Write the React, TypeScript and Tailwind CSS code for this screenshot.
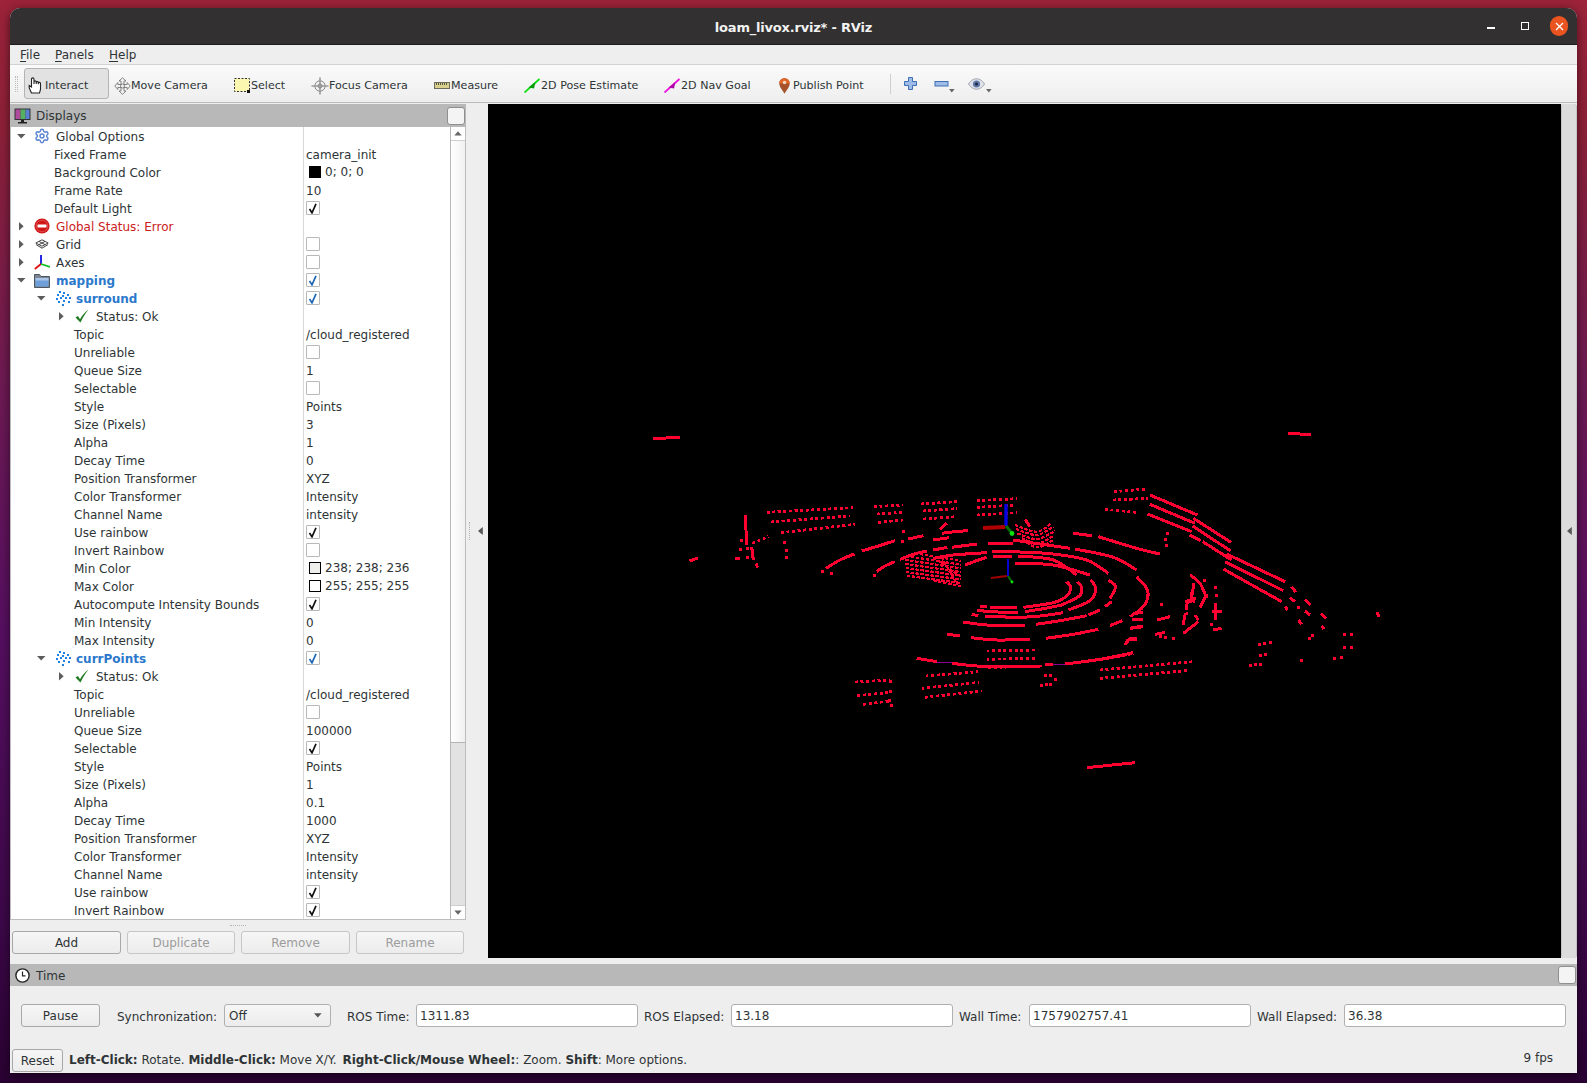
import type { ReactNode } from "react";
import { Settings } from "lucide-react";

type RowKind = "text" | "check" | "uncheck" | "color" | "none";

type Row = {
  label: string;
  level: number;
  arrow?: "down" | "right";
  icon?: "gear" | "error" | "grid" | "axes" | "folder" | "cloud" | "ok";
  tone?: "blue" | "red";
  value?: string;
  kind?: RowKind;
  swatch?: string;
};

const rows: Row[] = [
  { label: "Global Options", level: 0, arrow: "down", icon: "gear" },
  { label: "Fixed Frame", level: 1, value: "camera_init" },
  { label: "Background Color", level: 1, kind: "color", value: "0; 0; 0", swatch: "bg-black" },
  { label: "Frame Rate", level: 1, value: "10" },
  { label: "Default Light", level: 1, kind: "check" },
  { label: "Global Status: Error", level: 0, arrow: "right", icon: "error", tone: "red" },
  { label: "Grid", level: 0, arrow: "right", icon: "grid", kind: "uncheck" },
  { label: "Axes", level: 0, arrow: "right", icon: "axes", kind: "uncheck" },
  { label: "mapping", level: 0, arrow: "down", icon: "folder", tone: "blue", kind: "check" },
  { label: "surround", level: 1, arrow: "down", icon: "cloud", tone: "blue", kind: "check" },
  { label: "Status: Ok", level: 2, arrow: "right", icon: "ok" },
  { label: "Topic", level: 2, value: "/cloud_registered" },
  { label: "Unreliable", level: 2, kind: "uncheck" },
  { label: "Queue Size", level: 2, value: "1" },
  { label: "Selectable", level: 2, kind: "uncheck" },
  { label: "Style", level: 2, value: "Points" },
  { label: "Size (Pixels)", level: 2, value: "3" },
  { label: "Alpha", level: 2, value: "1" },
  { label: "Decay Time", level: 2, value: "0" },
  { label: "Position Transformer", level: 2, value: "XYZ" },
  { label: "Color Transformer", level: 2, value: "Intensity" },
  { label: "Channel Name", level: 2, value: "intensity" },
  { label: "Use rainbow", level: 2, kind: "check" },
  { label: "Invert Rainbow", level: 2, kind: "uncheck" },
  { label: "Min Color", level: 2, kind: "color", value: "238; 238; 236", swatch: "bg-[#eeeeec]" },
  { label: "Max Color", level: 2, kind: "color", value: "255; 255; 255", swatch: "bg-white" },
  { label: "Autocompute Intensity Bounds", level: 2, kind: "check" },
  { label: "Min Intensity", level: 2, value: "0" },
  { label: "Max Intensity", level: 2, value: "0" },
  { label: "currPoints", level: 1, arrow: "down", icon: "cloud", tone: "blue", kind: "check" },
  { label: "Status: Ok", level: 2, arrow: "right", icon: "ok" },
  { label: "Topic", level: 2, value: "/cloud_registered" },
  { label: "Unreliable", level: 2, kind: "uncheck" },
  { label: "Queue Size", level: 2, value: "100000" },
  { label: "Selectable", level: 2, kind: "check" },
  { label: "Style", level: 2, value: "Points" },
  { label: "Size (Pixels)", level: 2, value: "1" },
  { label: "Alpha", level: 2, value: "0.1" },
  { label: "Decay Time", level: 2, value: "1000" },
  { label: "Position Transformer", level: 2, value: "XYZ" },
  { label: "Color Transformer", level: 2, value: "Intensity" },
  { label: "Channel Name", level: 2, value: "intensity" },
  { label: "Use rainbow", level: 2, kind: "check" },
  { label: "Invert Rainbow", level: 2, kind: "check" },
];

// point cloud pieces, measured in 3x crops of the view: [originX, originY, lines]
// d = dotted rows, s = solid runs, b = dense rows, p = single points
type Piece = [number, number, { d?: number[][]; s?: number[][]; b?: number[][]; p?: number[][] }];

const cloud: Piece[] = [
  [
    720,
    470,
    {
      d: [
        [140, 127, 400, 113],
        [152, 156, 390, 138],
        [183, 188, 405, 163],
        [462, 110, 550, 105],
        [470, 132, 548, 127],
        [475, 157, 550, 150],
        [602, 102, 712, 95],
        [608, 123, 710, 116],
        [610, 147, 710, 140],
        [770, 92, 890, 86],
        [770, 112, 888, 105],
        [770, 135, 892, 128],
        [97, 220, 145, 200],
        [800, 543, 945, 540],
        [800, 568, 945, 565],
        [805, 593, 965, 588],
        [617, 618, 775, 605],
        [605, 655, 778, 637],
        [615, 682, 785, 663],
        [405, 636, 510, 630],
        [412, 677, 510, 667],
        [430, 703, 510, 693],
      ],
      b: [
        [585, 250, 722, 272],
        [558, 258, 722, 284],
        [556, 270, 722, 295],
        [556, 282, 722, 306],
        [557, 294, 722, 317],
        [557, 306, 722, 328],
        [560, 317, 722, 339],
        [640, 331, 722, 349],
        [640, 262, 722, 320],
        [665, 262, 712, 345],
        [885, 165, 950, 185, 995, 160],
        [888, 177, 950, 195, 1000, 170],
        [892, 190, 950, 207, 1005, 183],
        [905, 205, 955, 220, 1003, 196],
        [920, 218, 955, 232, 1000, 210],
      ],
      s: [
        [77, 135, 79, 225],
        [95, 230, 100, 270],
        [45, 267, 60, 265],
        [108, 280, 113, 293],
        [318, 295, 360, 270, 403, 252],
        [425, 243, 475, 228, 525, 212],
        [470, 305, 495, 288, 525, 275],
        [540, 268, 580, 253, 620, 243],
        [640, 240, 682, 232],
        [565, 207, 610, 197],
        [640, 210, 688, 203],
        [665, 190, 705, 185, 745, 182],
        [660, 178, 680, 160],
        [695, 232, 770, 222],
        [805, 220, 880, 220],
        [815, 244, 900, 246, 1000, 252, 1100, 270, 1165, 310],
        [880, 210, 960, 222, 1050, 235],
        [1060, 190, 1115, 197],
        [1135, 200, 1250, 235, 1320, 252],
        [1065, 237, 1180, 262, 1250, 300],
        [1250, 320, 1280, 355, 1283, 385, 1265, 415, 1230, 440],
        [640, 265, 700, 255, 800, 248],
        [820, 260, 875, 260],
        [895, 258, 1000, 270, 1070, 315],
        [735, 285, 770, 272, 800, 262],
        [885, 280, 1000, 285, 1110, 315],
        [1072, 335, 1085, 352, 1078, 378, 1025, 405],
        [1112, 330, 1127, 355, 1110, 392, 1045, 420],
        [1165, 330, 1187, 350, 1170, 385],
        [1040, 335, 1052, 352, 1040, 378, 1000, 398, 910, 412],
        [810, 412, 890, 414],
        [780, 408, 800, 408],
        [770, 420, 810, 425, 895, 428],
        [915, 425, 970, 416, 1025, 405],
        [755, 433, 775, 437],
        [795, 438, 890, 442, 960, 438, 1030, 428],
        [1105, 435, 1140, 420],
        [730, 456, 800, 465, 915, 466],
        [948, 463, 1020, 452, 1100, 437],
        [1170, 467, 1207, 452],
        [680, 492, 720, 498],
        [752, 503, 830, 510, 930, 508],
        [978, 505, 1060, 493, 1135, 478],
        [590, 565, 650, 575],
        [695, 580, 800, 590, 960, 590],
        [975, 585, 1000, 583],
        [1035, 582, 1140, 568, 1240, 548],
        [915, 148, 930, 170],
        [1240, 430, 1270, 428],
        [1235, 450, 1270, 448],
        [1232, 472, 1270, 470],
        [1225, 508, 1250, 508],
        [1225, 508, 1215, 525],
      ],
      p: [
        [65, 210],
        [62, 238],
        [82, 235],
        [82, 263],
        [193, 216],
        [198, 240],
        [200, 262],
        [308, 305],
        [335, 310],
        [462, 316],
        [550, 185],
        [548, 215],
        [975, 617],
        [990, 617],
        [1005, 627],
        [965, 645],
        [978, 643],
        [990, 642],
        [510, 635],
        [510, 665],
        [507, 692],
        [513, 705],
      ],
    },
  ],
  [
    1100,
    470,
    {
      d: [
        [42, 65, 140, 57],
        [38, 90, 145, 85],
        [15, 118, 110, 127],
        [0, 570, 100, 550],
        [0, 600, 280, 575],
        [0, 625, 260, 602],
      ],
      s: [
        [150, 75, 292, 135],
        [150, 103, 285, 160],
        [143, 132, 275, 185],
        [280, 145, 393, 217],
        [278, 168, 392, 243],
        [268, 195, 302, 212],
        [308, 215, 395, 270],
        [380, 252, 555, 335],
        [375, 275, 550, 362],
        [370, 297, 545, 395],
        [270, 315, 300, 340, 320, 385],
        [300, 412, 320, 372],
        [282, 340, 272, 400],
        [250, 490, 295, 455],
        [345, 400, 345, 450],
        [335, 425, 365, 425],
        [340, 480, 365, 475],
        [172, 450, 210, 440],
        [165, 493, 195, 487],
        [90, 475, 130, 470],
        [80, 520, 90, 505, 110, 505],
        [575, 350, 587, 367],
        [570, 383, 585, 395],
        [555, 410, 563, 420],
        [590, 412, 600, 412],
        [615, 388, 632, 405],
        [615, 423, 630, 435],
        [595, 450, 605, 463],
        [663, 430, 678, 445],
        [665, 468, 672, 477],
        [830, 427, 838, 440],
        [258, 420, 265, 392, 285, 395],
        [250, 465, 255, 435, 265, 432],
        [285, 435, 295, 450],
        [15, 410, 35, 395],
      ],
      p: [
        [202, 190],
        [195, 207],
        [200, 227],
        [185, 403],
        [345, 352],
        [350, 375],
        [180, 500],
        [195, 503],
        [220, 505],
        [627, 505],
        [637, 497],
        [733, 493],
        [753, 493],
        [733, 533],
        [753, 533],
        [703, 565],
        [723, 562],
        [478, 522],
        [493, 520],
        [510, 517],
        [480, 555],
        [497, 553],
        [450, 585],
        [465, 583],
        [480, 582],
        [605, 572],
        [313, 332],
        [335, 462],
        [258, 395],
        [275, 370],
        [282, 385],
      ],
    },
  ],
  [840, 640, { s: [[740, 383, 885, 368]] }],
  [
    653,
    439,
    {
      s: [
        [0, 0, 80, -6],
        [1905, -18, 1975, -12],
        [110, 366, 135, 357],
      ],
    },
  ],
];

// smooth a measured run of points into a curve
const toPath = (n: number[], ox: number, oy: number) => {
  const pts: number[][] = [];
  for (let i = 0; i < n.length; i += 2) pts.push([ox + n[i] / 3, oy + n[i + 1] / 3]);
  let d = `M${pts[0][0]} ${pts[0][1]}`;
  for (let i = 0; i < pts.length - 1; i++) {
    const a = pts[Math.max(i - 1, 0)];
    const b = pts[i];
    const c = pts[i + 1];
    const e = pts[Math.min(i + 2, pts.length - 1)];
    d += ` C${b[0] + (c[0] - a[0]) / 6} ${b[1] + (c[1] - a[1]) / 6} ${c[0] - (e[0] - b[0]) / 6} ${c[1] - (e[1] - b[1]) / 6} ${c[0]} ${c[1]}`;
  }
  return d;
};

const PointCloud = () => (
  <svg viewBox="488 104 1073 854" className="block h-full w-full" shapeRendering="crispEdges">
    <rect x="488" y="104" width="1073" height="854" fill="#000" />
    <g fill="none" stroke="#8a0090" strokeWidth="1">
      <polyline points="937,662 953,663" />
      <polyline points="1045,664 1066,664" />
    </g>
    {cloud.map(([ox, oy, g], i) => (
      <g key={i} fill="none" stroke="#ff0030">
        {g.s?.map((n, j) => <path key={j} d={toPath(n, ox, oy)} strokeWidth="3" />)}
        {g.d?.map((n, j) => <path key={j} d={toPath(n, ox, oy)} strokeWidth="2.800" strokeDasharray="3 2.600" />)}
        {g.b?.map((n, j) => <path key={j} d={toPath(n, ox, oy)} strokeWidth="2.200" strokeDasharray="3.500 1.500" />)}
        {g.p?.map((n, j) => (
          <rect key={j} x={ox + n[0] / 3 - 1.5} y={oy + n[1] / 3 - 1.5} width="3" height="3" fill="#ff0030" stroke="none" />
        ))}
      </g>
    ))}
    {/* fixed frame axes */}
    <g fill="none" shapeRendering="auto">
      <line x1="1006" y1="504" x2="1006" y2="526" stroke="#0000e0" strokeWidth="3.400" />
      <line x1="983" y1="528" x2="1005" y2="527" stroke="#b00000" strokeWidth="4" />
      <line x1="1006" y1="526" x2="1012" y2="533" stroke="#007000" strokeWidth="3" />
      <circle cx="1012" cy="533.500" r="2.400" fill="#10e010" />
      <line x1="1008" y1="559" x2="1008" y2="576" stroke="#0000d0" strokeWidth="2" />
      <line x1="991" y1="578" x2="1007" y2="576" stroke="#a00000" strokeWidth="2" />
      <line x1="1008" y1="576" x2="1012" y2="582" stroke="#007000" strokeWidth="2" />
      <circle cx="1012" cy="582" r="1.400" fill="#10e010" />
    </g>
  </svg>
);

const TreeArrow = ({ dir }: { dir: "down" | "right" }) =>
  dir === "down" ? (
    <svg width="9" height="5" viewBox="0 0 9 5" className="block">
      <path d="M0 0h8.500L4.200 4.600z" fill="#5c5c5c" />
    </svg>
  ) : (
    <svg width="5" height="9" viewBox="0 0 5 9" className="block">
      <path d="M0 0v8.500L4.600 4.200z" fill="#5c5c5c" />
    </svg>
  );

const RowIcon = ({ icon }: { icon: NonNullable<Row["icon"]> }) => {
  if (icon === "gear") return <Settings size={16} strokeWidth={2.2} color="#5a86cf" />;
  if (icon === "error")
    return (
      <svg width="16" height="16" viewBox="0 0 16 16">
        <circle cx="8" cy="8" r="7.600" fill="#d01818" />
        <circle cx="8" cy="8" r="5.800" fill="none" stroke="#e86a6a" strokeWidth="0.600" />
        <rect x="3.500" y="6.400" width="9" height="3.200" rx="0.600" fill="#fff" />
      </svg>
    );
  if (icon === "grid")
    return (
      <svg width="14" height="10" viewBox="0 0 14 10" fill="none" stroke="#444" strokeWidth="1">
        <path d="M7 .8 13.200 4 7 7.200.8 4z" />
        <path d="M4 2.400 10 5.600M10 2.400 4 5.600" />
        <path d="M1 5.600 7 9.200l6-3.600" />
      </svg>
    );
  if (icon === "axes")
    return (
      <svg width="16" height="16" viewBox="0 0 16 16" fill="none" strokeWidth="1.800">
        <path d="M7 1v9" stroke="#1010e0" />
        <path d="M7 10 .8 15" stroke="#e01010" />
        <path d="M7 10l9 3" stroke="#10c020" />
      </svg>
    );
  if (icon === "folder")
    return (
      <svg width="16" height="15" viewBox="0 0 16 15">
        <path d="M.5 1.500h5l1.500 2h8.500v11H.500z" fill="#7d8794" stroke="#4c5661" />
        <rect x="1.500" y="5" width="13" height="8.500" fill="#6f9fd8" />
        <rect x="1.500" y="5" width="13" height="2.500" fill="#a9c6ea" />
      </svg>
    );
  if (icon === "cloud")
    return (
      <svg width="16" height="16" viewBox="0 0 16 16" fill="#1c80e8" shapeRendering="crispEdges">
        {[
          [4, 1], [8, 2], [2, 4], [7, 5], [12, 4], [1, 8], [5, 7], [10, 7], [14, 7],
          [3, 11], [8, 10], [13, 11], [7, 14],
        ].map(([x, y], i) => (
          <rect key={i} x={x} y={y} width="2" height="2" />
        ))}
      </svg>
    );
  return (
    <svg width="14" height="14" viewBox="0 0 14 14">
      <path d="M.5 8.500 3 7l2 3.200C7 6.500 10 3 13.500.5 10.500 4 8 8.500 5.500 13.500z" fill="#1f7a1f" />
    </svg>
  );
};

const CheckBox = ({ on, blue }: { on: boolean; blue: boolean }) => (
  <span className="flex h-[14px] w-[14px] items-center justify-center rounded-[1px] border border-[#b8b8b8] bg-white">
    {on && (
      <svg width="10" height="11" viewBox="0 0 10 11" fill="none" stroke={blue ? "#1f66b5" : "#111"} strokeWidth="1.700">
        <path d="M1.500 6 4 9.800 8 .8" />
      </svg>
    )}
  </span>
);

const TreeRow = ({ row }: { row: Row }) => {
  const toneClass =
    row.tone === "blue" ? "font-bold text-[#2b78cc]" : row.tone === "red" ? "text-[#cc2020]" : "text-[#2e3436]";
  const arrowGap = row.level === 2 ? 45 : row.level === 1 ? 25 : 5;
  const plainIndent = row.level === 2 ? 63 : 43;
  return (
    <div className="flex h-[18px] items-center">
      <div className="flex h-full w-[293px] items-center border-r border-[#d8d8d8]">
        {row.arrow && (
          <span className="flex w-[10px] items-center justify-center" style={{ marginLeft: arrowGap }}>
            <TreeArrow dir={row.arrow} />
          </span>
        )}
        {row.icon && (
          <span
            className="flex w-[16px] items-center justify-center"
            style={{ marginLeft: row.level === 0 ? 8 : row.level === 1 ? 9 : 8 }}
          >
            <RowIcon icon={row.icon} />
          </span>
        )}
        <span
          className={`whitespace-nowrap pt-[2px] ${toneClass}`}
          style={{ marginLeft: row.icon ? (row.level === 1 ? 5 : 6) : plainIndent }}
        >
          {row.label}
        </span>
      </div>
      <div className="flex h-full flex-1 items-center pl-[2px] text-[#2e3436]">
        {(row.kind === "check" || row.kind === "uncheck") && (
          <CheckBox on={row.kind === "check"} blue={row.tone === "blue"} />
        )}
        {row.kind === "color" && (
          <span className="flex items-center">
            <span className={`ml-[3px] h-[12px] w-[12px] border border-black ${row.swatch}`} />
            <span className="ml-[4px] whitespace-nowrap">{row.value}</span>
          </span>
        )}
        {(!row.kind || row.kind === "text") && row.value && <span className="whitespace-nowrap pt-[2px]">{row.value}</span>}
      </div>
    </div>
  );
};

const FloatBox = () => <span className="h-[18px] w-[18px] rounded-[3px] border border-[#8f8f8f] bg-[#f4f4f4]" />;

const PanelButton = ({ label, disabled, className = "" }: { label: string; disabled?: boolean; className?: string }) => (
  <div
    className={`flex h-[23px] items-center justify-center rounded-[3px] border bg-gradient-to-b from-[#f6f6f6] to-[#ececec] ${
      disabled ? "border-[#c6c6c6] text-[#9c9c9c]" : "border-[#a8a8a8] text-[#2e3436]"
    } ${className}`}
  >
    {label}
  </div>
);

const TimeInput = ({ value, className = "" }: { value: string; className?: string }) => (
  <div className={`flex h-[23px] items-center rounded-[3px] border border-[#b0b0b0] bg-white pl-[3px] text-[#2e3436] ${className}`}>
    {value}
  </div>
);

const ToolButton = ({ icon, label, w, active }: { icon: ReactNode; label: string; w: string; active?: boolean }) => (
  <div
    className={`flex h-[31px] shrink-0 items-center whitespace-nowrap pt-[4px] text-[11.100px] text-[#2e3436] ${w} ${
      active ? "rounded-[3px] border border-[#b4b4b4] bg-[#e2e2e2] pl-[2px]" : "pl-[4px]"
    }`}
  >
    <span className="flex w-[18px] shrink-0 items-center justify-center">{icon}</span>
    {label}
  </div>
);

const Caret = () => (
  <svg width="6" height="4" viewBox="0 0 6 4" className="mt-[14px] block">
    <path d="M0 0h5.600L2.800 3.400z" fill="#666" />
  </svg>
);

const icons = {
  hand: (
    <svg width="17" height="17" viewBox="0 0 17 17" fill="#fff" stroke="#222" strokeWidth="1.100">
      <path d="M3.500 16 1.200 11V8.500l2.300 1.500V2.200c0-1.800 2.500-1.800 2.500 0V7 4.800c0-1.300 2.200-1.300 2.200 0V7 5.500c0-1.200 2.100-1.200 2.100 0v1.700-1c0-1.200 2.200-1.100 2.200.2V12.500L11.500 16z" />
    </svg>
  ),
  move: (
    <svg width="17" height="18" viewBox="0 0 17 18" fill="#f2f2f2" stroke="#777" strokeWidth="0.900">
      <path d="M8.500.8 12 4H10v3.500h3.200V5.500l3 3.500-3 3.500v-2H10V14h2l-3.500 3.400L5 14h2v-3.500H3.800v2l-3-3.500 3-3.500v2H7V4H5z" />
      <circle cx="8.500" cy="9" r="2" fill="none" />
    </svg>
  ),
  select: (
    <svg width="16" height="15" viewBox="0 0 16 15">
      <rect x="0.500" y="0.500" width="15" height="13" fill="#fbf6b0" stroke="#333" strokeDasharray="2 1.500" />
      <rect x="13" y="12" width="3" height="3" fill="#111" />
    </svg>
  ),
  focus: (
    <svg width="18" height="18" viewBox="0 0 18 18" fill="none" stroke="#8a8a8a" strokeWidth="1">
      <circle cx="9" cy="9" r="5.200" fill="#efefef" />
      <path d="M9 .5v17M.5 9h17" strokeWidth="1.600" stroke="#9a9a9a" />
      <circle cx="9" cy="9" r="2" />
    </svg>
  ),
  measure: (
    <svg width="16" height="7" viewBox="0 0 16 7" shapeRendering="crispEdges">
      <rect x="0.500" y="0.500" width="15" height="6" fill="#d8d08c" stroke="#6c6c5c" />
      <path d="M2.500 1v2M4.500 1v2M6.500 1v2M8.500 1v2M10.500 1v2M12.500 1v2" stroke="#55553f" />
    </svg>
  ),
  pose: (
    <svg width="17" height="15" viewBox="0 0 17 15" fill="none">
      <path d="M.5 14.500 15.500 1" stroke="#12e012" strokeWidth="1.800" />
      <path d="M4.500 9.500 11.500 4l-1.500 6.500z" fill="#0a9a0a" />
    </svg>
  ),
  nav: (
    <svg width="17" height="15" viewBox="0 0 17 15" fill="none">
      <path d="M.5 14.500 15.500 1" stroke="#f010e0" strokeWidth="1.800" />
      <path d="M4.500 9.500 11.500 4l-1.500 6.500z" fill="#b008a8" />
    </svg>
  ),
  pin: (
    <svg width="11" height="16" viewBox="0 0 11 16">
      <path d="M5.500.3C2.500.3.300 2.500.300 5.400c0 3.500 3.500 7 5.200 10.300C7.200 12.400 10.700 8.900 10.700 5.400 10.700 2.500 8.500.300 5.500.300z" fill="#a5522a" />
      <path d="M5.500.3C2.500.3.300 2.500.300 5.400h10.400C10.700 2.500 8.500.300 5.500.300z" fill="#e0682c" />
      <circle cx="5.500" cy="4.500" r="1.700" fill="#f6d8c0" />
    </svg>
  ),
};

const MenuItem = ({ first, rest, w }: { first: string; rest: string; w: string }) => (
  <span className={`${w} text-[#2e3436]`}>
    <span className="underline underline-offset-2">{first}</span>
    {rest}
  </span>
);

export default function App() {
  return (
    <div
      className="h-[1083px] w-[1587px] overflow-hidden bg-[linear-gradient(180deg,#9c2339_0%,#8c2038_12%,#6d1a52_35%,#560f60_58%,#3c0848_85%,#2a0232_100%)] pl-[10px] pt-[8px] text-[12px] leading-none"
      style={{ fontFamily: '"DejaVu Sans", sans-serif' }}
    >
      <div className="flex h-[1065px] w-[1567px] flex-col rounded-t-[10px] bg-[#eeeeee] shadow-[0_2px_10px_rgba(0,0,0,0.55)]">
        {/* title bar */}
        <div className="flex h-[37px] shrink-0 items-center rounded-t-[10px] border-b border-[#1e1c1c] bg-[#323030] pr-[9px]">
          <div className="flex-1 pl-[90px] pt-[2px] text-center text-[13px] font-bold tracking-[-0.2px] text-[#f2f2f2]">
            loam_livox.rviz* - RViz
          </div>
          <div className="flex items-center">
            <span className="mr-[26px] mt-[4px] h-[1.500px] w-[8px] bg-white" />
            <span className="mr-[21px] h-[8px] w-[8px] border border-white" />
            <span className="flex h-[20px] w-[18px] items-center justify-center rounded-full bg-[#e95420]">
              <svg width="9" height="9" viewBox="0 0 9 9" stroke="#fff" strokeWidth="1.300">
                <path d="M1 1l7 7M8 1 1 8" />
              </svg>
            </span>
          </div>
        </div>

        {/* menu bar */}
        <div className="flex h-[20px] shrink-0 items-center border-b border-[#d2d2d2] pl-[10px] text-[12px]">
          <MenuItem first="F" rest="ile" w="w-[35px]" />
          <MenuItem first="P" rest="anels" w="w-[54px]" />
          <MenuItem first="H" rest="elp" w="w-[40px]" />
        </div>

        {/* tool bar */}
        <div className="flex h-[38px] shrink-0 items-center border-b border-[#bcbcbc] bg-gradient-to-b from-[#fafafa] to-[#eeeeee] pl-[5px]">
          <span className="mr-[6px] h-[16px] w-[3px] border-x border-dotted border-[#bdbdbd]" />
          <ToolButton icon={icons.hand} label="Interact" w="w-[85px]" active />
          <ToolButton icon={icons.move} label="Move Camera" w="w-[120px]" />
          <ToolButton icon={icons.select} label="Select" w="w-[78px]" />
          <ToolButton icon={icons.focus} label="Focus Camera" w="w-[122px]" />
          <ToolButton icon={icons.measure} label="Measure" w="w-[90px]" />
          <ToolButton icon={icons.pose} label="2D Pose Estimate" w="w-[140px]" />
          <ToolButton icon={icons.nav} label="2D Nav Goal" w="w-[112px]" />
          <ToolButton icon={icons.pin} label="Publish Point" w="w-[119px]" />
          <span className="h-[20px] w-px bg-[#cfcfcf]" />
          <span className="ml-[11px]">
            <svg width="17" height="17" viewBox="0 0 17 17">
              <path d="M6.500 2.500h4v4h4v4h-4v4h-4v-4h-4v-4h4z" fill="#9dbce8" stroke="#3f6fb5" />
            </svg>
          </span>
          <span className="ml-[15px]">
            <svg width="15" height="8" viewBox="0 0 15 8">
              <rect x="1" y="1.500" width="13" height="4.500" fill="#9dbce8" stroke="#3f6fb5" />
            </svg>
          </span>
          <Caret />
          <span className="ml-[13px]">
            <svg width="17" height="12" viewBox="0 0 17 12">
              <path d="M.5 6C3 2 6 .8 8.500.8S14 2 16.500 6C14 10 11 11.200 8.500 11.200S3 10 .5 6z" fill="#dfe3ea" stroke="#9a9fa8" />
              <circle cx="8.500" cy="6" r="3.600" fill="#5f78a8" />
              <circle cx="8.500" cy="6" r="1.600" fill="#1e2a44" />
            </svg>
          </span>
          <span className="ml-[1px]">
            <Caret />
          </span>
        </div>

        <div className="h-px shrink-0" />

        {/* centre: displays dock, view, right handle */}
        <div className="flex h-[854px] shrink-0">
          <div className="flex w-[456px] shrink-0 flex-col">
            <div className="flex h-[23px] shrink-0 items-center bg-[#b8b8b8] pl-[4px] pr-[1px] text-[#2e3436]">
              <svg width="17" height="16" viewBox="0 0 17 16" className="shrink-0">
                <rect x="0.500" y="0.500" width="16" height="11.500" fill="#333" />
                <rect x="1.500" y="1.500" width="5" height="9.500" fill="#b04a9c" />
                <rect x="6.500" y="1.500" width="5" height="9.500" fill="#55b060" />
                <rect x="11.500" y="1.500" width="4" height="9.500" fill="#5a7fd0" />
                <path d="M7 12h3v2H7zM4 14h9v1.500H4z" fill="#222" />
              </svg>
              <span className="ml-[5px] flex-1 pt-px">Displays</span>
              <FloatBox />
            </div>
            <div className="flex h-[793px] shrink-0 border-x border-b border-[#bdbdbd] bg-white">
              <div className="w-[440px] shrink-0 border-r border-[#b8b8b8] pb-px">
                {rows.map((row, i) => (
                  <TreeRow key={i} row={row} />
                ))}
              </div>
              <div className="flex flex-1 flex-col">
                <div className="flex h-[14px] shrink-0 items-center justify-center border-b border-[#cfcfcf] bg-white">
                  <svg width="8" height="5" viewBox="0 0 8 5">
                    <path d="M4 .3 7.700 4.500H.3z" fill="#666" />
                  </svg>
                </div>
                <div className="h-[601px] shrink-0 bg-gradient-to-r from-[#ffffff] to-[#f0f0f0]" />
                <div className="flex-1 border-t border-[#b4b4b4] bg-[#e2e2e2]" />
                <div className="flex h-[14px] shrink-0 items-center justify-center border-t border-[#cfcfcf] bg-white">
                  <svg width="8" height="5" viewBox="0 0 8 5">
                    <path d="M4 4.700 7.700.5H.3z" fill="#666" />
                  </svg>
                </div>
              </div>
            </div>
            <div className="flex h-[11px] shrink-0 items-center justify-center">
              <span className="h-px w-[16px] border-t border-dotted border-[#b4b4b4]" />
            </div>
            <div className="flex gap-[6px] pl-[2px]">
              <PanelButton label="Add" className="w-[109px]" />
              <PanelButton label="Duplicate" disabled className="w-[108px]" />
              <PanelButton label="Remove" disabled className="w-[109px]" />
              <PanelButton label="Rename" disabled className="w-[108px]" />
            </div>
          </div>

          {/* left dock handle */}
          <div className="flex w-[22px] shrink-0 items-center pl-[3px]">
            <span className="h-[18px] w-px border-l border-dotted border-[#b0b0b0]" />
            <svg width="5" height="8" viewBox="0 0 5 8" className="ml-[8px]">
              <path d="M4.800 0v8L0 4z" fill="#555" />
            </svg>
          </div>

          <div className="w-[1073px] shrink-0">
            <PointCloud />
          </div>

          <div className="flex w-[16px] shrink-0 items-center justify-center rounded-[3px] border-x border-[#c4c4c4] bg-[#dcdcdc]">
            <svg width="5" height="8" viewBox="0 0 5 8">
              <path d="M4.800 0v8L0 4z" fill="#555" />
            </svg>
          </div>
        </div>

        {/* time panel */}
        <div className="mt-[6px] flex h-[22px] shrink-0 items-center bg-[#b8b8b8] pl-[5px] pr-[1px] text-[#2e3436]">
          <svg width="15" height="15" viewBox="0 0 15 15" className="shrink-0">
            <circle cx="7.500" cy="7.500" r="6.600" fill="#fff" stroke="#222" strokeWidth="1.400" />
            <path d="M7.500 3.500v4.300h3" fill="none" stroke="#222" strokeWidth="1.200" />
          </svg>
          <span className="ml-[6px] flex-1 pt-px">Time</span>
          <FloatBox />
        </div>

        <div className="mt-[18px] flex h-[23px] shrink-0 items-center text-[#2e3436]">
          <PanelButton label="Pause" className="ml-[11px] w-[79px] shrink-0" />
          <span className="w-[124px] shrink-0 pl-[17px] pt-[2px]">Synchronization:</span>
          <div className="flex h-[23px] w-[107px] shrink-0 items-center justify-between rounded-[3px] border border-[#b0b0b0] bg-gradient-to-b from-[#f6f6f6] to-[#ececec] pl-[4px] pr-[8px]">
            Off
            <svg width="8" height="5" viewBox="0 0 8 5">
              <path d="M0 .3h7.600L3.800 4.500z" fill="#555" />
            </svg>
          </div>
          <span className="w-[85px] shrink-0 pl-[16px] pt-[2px]">ROS Time:</span>
          <TimeInput value="1311.83" className="w-[222px] shrink-0" />
          <span className="w-[93px] shrink-0 pl-[6px] pt-[2px]">ROS Elapsed:</span>
          <TimeInput value="13.18" className="w-[222px] shrink-0" />
          <span className="w-[76px] shrink-0 pl-[6px] pt-[2px]">Wall Time:</span>
          <TimeInput value="1757902757.41" className="w-[222px] shrink-0" />
          <span className="w-[93px] shrink-0 pl-[6px] pt-[2px]">Wall Elapsed:</span>
          <TimeInput value="36.38" className="w-[222px] shrink-0" />
        </div>

        <div className="mt-[22px] flex h-[22px] shrink-0 items-center text-[#2e3436]">
          <PanelButton label="Reset" className="ml-[2px] !h-[23px] w-[51px] shrink-0 pt-[2px]" />
          <p className="ml-[6px] flex-1 whitespace-nowrap">
            <b>Left-Click:</b> Rotate. <b>Middle-Click:</b> Move X/Y. <b className="ml-[2px]">Right-Click/Mouse Wheel:</b>: Zoom.{" "}
            <b>Shift</b>: More options.
          </p>
          <span className="mb-[4px] mr-[24px]">9 fps</span>
        </div>
      </div>
    </div>
  );
}
